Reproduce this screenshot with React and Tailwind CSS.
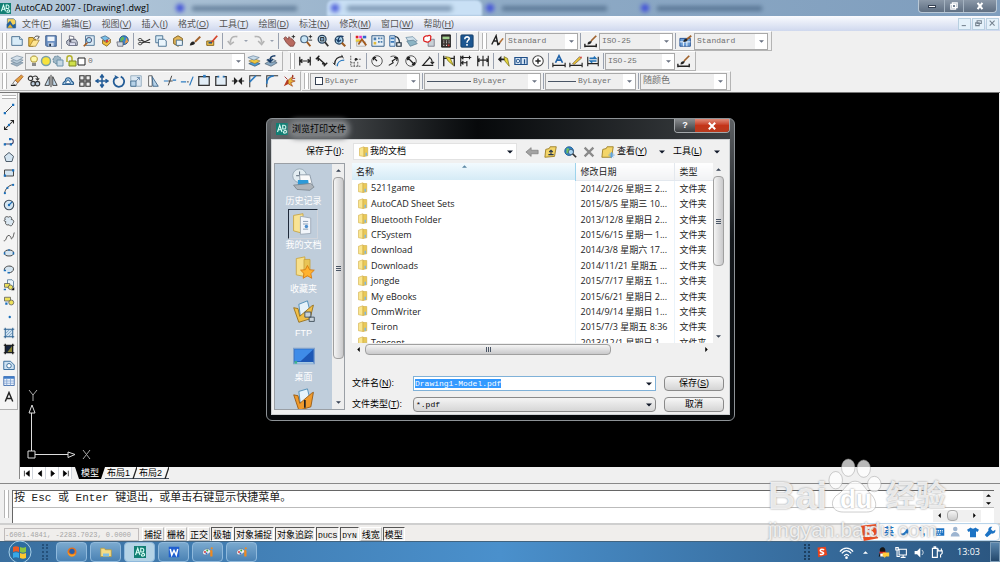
import React, { useEffect, useRef } from 'react';

const MENU = ['文件(F)', '编辑(E)', '视图(V)', '插入(I)', '格式(O)', '工具(T)', '绘图(D)', '标注(N)', '修改(M)', '窗口(W)', '帮助(H)'];

const FILES = [
  ['5211game', '2014/2/26 星期三 2...'],
  ['AutoCAD Sheet Sets', '2015/8/5 星期三 10...'],
  ['Bluetooth Folder', '2013/12/8 星期日 2...'],
  ['CFSystem', '2015/6/15 星期一 1...'],
  ['download', '2014/3/8 星期六 17...'],
  ['Downloads', '2014/11/21 星期五 ...'],
  ['jongde', '2015/7/17 星期五 1...'],
  ['My eBooks', '2015/6/21 星期日 2...'],
  ['OmmWriter', '2014/9/14 星期日 1...'],
  ['Teiron', '2015/7/3 星期五 8:36'],
  ['Tencent', '2013/12/1 星期日 1...'],
];

const ICONS = {
  new: <><path d="M2 3h9l3 3v7H2z" fill="#d9ecf8" stroke="#41698c" /><path d="M11 3v3h3" fill="#fff" stroke="#41698c" /></>,
  open: <><path d="M2 14V4h5l1 2h2L7 14z" fill="#f0c34a" stroke="#8d6a1a" /><path d="M3 14l4-7h7l-4 7z" fill="#ffe692" stroke="#8d6a1a" strokeWidth=".7" /><path d="M8 5c1-3 4-3 6-2l-2 3" stroke="#333" fill="none" /></>,
  save: <><path d="M2 2h12v12H3l-1-1z" fill="#6f93c4" stroke="#2d4f80" /><path d="M4 3h8v5H4z" fill="#eef4fb" /><path d="M5 10h6v4H5z" fill="#c8d6e8" /><path d="M6 11h2v3H6z" fill="#234" /></>,
  plot: <><path d="M5 7V2l5 1v4" fill="#fff" stroke="#667" /><path d="M2 8l3-2h7l2 3v4H4l-2-2z" fill="#c8ccd8" stroke="#4b5268" /><path d="M5 10h7v3H5z" fill="#eef" stroke="#4b5268" strokeWidth=".7" /><circle cx="6" cy="8" r="1.4" fill="#556" /></>,
  preview: <><path d="M4 2h10v11H4z" fill="#dbeaf5" stroke="#486f91" /><circle cx="8" cy="7" r="3" fill="#aee0f8" stroke="#446" /><path d="M6 10l-4 4" stroke="#a45a1c" strokeWidth="2" /></>,
  publish: <><path d="M2 4l5-2 5 3-5 3z" fill="#7cc0e8" stroke="#246" strokeWidth=".7" /><path d="M4 7l5 3 4-4v4l-4 4-5-3z" fill="#f0bf3c" stroke="#6b4d10" strokeWidth=".8" /><circle cx="9" cy="8" r="1.5" fill="#d33" /></>,
  globe: <><circle cx="9" cy="7" r="5" fill="#3c86cc" stroke="#1d4d80" /><path d="M7 3c3 0 3 3 1 4s0 3-2 3c-1-2-2-5 1-7z" fill="#64b755" /><path d="M12 4l2 5-4 2z" fill="#e94" /><path d="M1 9h7v5H2z" fill="#d0d8e2" stroke="#556" strokeWidth=".8" /></>,
  cut: <><path d="M5 7l4 2 6-3M5 10.500L9 9l6 1" stroke="#333" strokeWidth="1.400" fill="none" /><ellipse cx="3.500" cy="6.500" rx="2" ry="1.400" fill="none" stroke="#333" /><ellipse cx="3.500" cy="11" rx="2" ry="1.400" fill="none" stroke="#333" /></>,
  copy: <><path d="M2 2h8v8H2z" fill="#d9ecf8" stroke="#41698c" /><path d="M5 6h7l2 2v6H5z" fill="#eaf5fc" stroke="#41698c" /></>,
  paste: <><path d="M3 5l5-3 5 3v6l-5 3-5-3z" fill="#e3b657" stroke="#785714" /><path d="M6 7h6l1 1v5H6z" fill="#e9f4fb" stroke="#41698c" /></>,
  match: <><path d="M2 13c1-4 3-5 5-4l1 1c0 2-3 3-6 3z" fill="#222" /><path d="M8 9l6-6" stroke="#a0622c" strokeWidth="2.4" /></>,
  block: <><path d="M2 8h8v5H2z" fill="#f1c24d" stroke="#7d5a10" /><path d="M7 10l7-8" stroke="#d5452b" strokeWidth="2" /><path d="M4 10h4" stroke="#357" strokeWidth="2" /></>,
  undo: <path d="M13 3C7 2 5 5 5 10M2 8l3 4 4-3" fill="none" stroke="#b4b4b4" strokeWidth="1.800" />,
  redo: <path d="M3 3c6-1 8 2 8 7M7 8l4 4 3-4" fill="none" stroke="#b4b4b4" strokeWidth="1.800" />,
  pan: <><path d="M2 5l2-2 3 3 1-3 2 2 2 1 3 4-2 4H9L5 10z" fill="#b86a60" stroke="#6e322c" strokeWidth=".8" /><path d="M11 3h4M13 1v4" stroke="#222" /></>,
  zoomrt: <><circle cx="6" cy="6" r="4" fill="#c8e6f7" stroke="#4d6a86" strokeWidth="1.400" /><path d="M9 9l4 5" stroke="#9c5a20" strokeWidth="2.200" /><path d="M11 3h4M13 1v4M11 7h4" stroke="#222" /></>,
  zoomwin: <><circle cx="7" cy="6" r="4.500" fill="#c8e6f7" stroke="#27415c" strokeWidth="1.500" /><path d="M5 4h4v4H5z" fill="#7ba3c4" stroke="#222" /><path d="M10 9l4 5" stroke="#333" strokeWidth="2" /></>,
  zoomprev: <><circle cx="7" cy="7" r="4.500" fill="#a6cfe8" stroke="#27415c" strokeWidth="1.500" /><path d="M10 10l4 4" stroke="#9c5a20" strokeWidth="2.400" /><path d="M12 3C8 1 6 4 6 8M4 6l2 3 3-2" fill="none" stroke="#173b66" strokeWidth="1.500" /></>,
  props: <><path d="M2 2h3v3H2z" fill="#d22" /><path d="M6 2h3v3H6z" fill="#e3c" /><path d="M10 2h4v3h-4z" fill="#36c" /><path d="M2 6h5v3H2z" fill="#ec3" /><path d="M3 9h10v5H3z" fill="#eee" stroke="#888" strokeWidth=".6" /><path d="M5 12l4-6 5 7" stroke="#a45a1c" strokeWidth="2" fill="none" /></>,
  dcenter: <><path d="M1 2h14v12H1z" fill="#e7f0f8" stroke="#24507c" /><path d="M3 4h3v3H3zM8 4h2v2H8zM11 4h2v2h-2zM8 8h2v2H8zM11 8h2v2h-2z" fill="#4e7fae" /><path d="M3 9h3v3H3z" fill="#e2bb3a" /></>,
  palette: <><path d="M2 2h6v12H2z" fill="#dcebf8" stroke="#2a5c93" /><path d="M3 4h4v2H3zM3 8h4v2H3z" fill="#3a78b8" /><path d="M8 3c4 0 5 3 5 7M10 10h5v4h-5z" fill="none" stroke="#234" strokeWidth="1.400" /></>,
  sheets: <><path d="M1 4l8-1 5 5-9 2z" fill="#cfe0ea" stroke="#6688a0" strokeWidth=".8" /><path d="M2 8l8-1 4 4-8 3z" fill="#8db4c4" stroke="#57788c" strokeWidth=".8" /></>,
  markup: <><path d="M7 6h7v8H7z" fill="#c9d0d6" stroke="#667" strokeWidth=".8" /><path d="M3 3c2-2 3 0 4-1s4 0 3 2 1 3-1 4-2 2-4 1-3 0-3-2-1-3 1-4z" fill="#fff" stroke="#d22" strokeWidth="1.500" /></>,
  calc: <><path d="M3 1h10v14H3z" fill="#3a3230" stroke="#111" /><path d="M4 3h8v3H4z" fill="#9fcf8c" /><path d="M5 8h1M8 8h1M11 8h1M5 10h1M8 10h1M11 10h1M5 13h1M8 13h1" stroke="#eee" strokeWidth="1.300" /><path d="M10 12h2v2h-2z" fill="#c33" /></>,
  help: <><rect x="1" y="1" width="14" height="14" rx="1" fill="#1d5791" stroke="#123a64" /><path d="M5.500 6c0-4 5.500-3 5-.5C10 7.500 8 7 8 10M8 11.500v2" fill="none" stroke="#fff" strokeWidth="1.800" /></>,
  textstyle: <><path d="M2 12l5-10 2 10M4 8h5" fill="none" stroke="#222" strokeWidth="1.600" /><path d="M8 13c0-3 2-4 4-3-1 3-2 3-4 3z" fill="#222" /><path d="M11 10l4-5" stroke="#b16f35" strokeWidth="1.800" /></>,
  dimstyle: <><path d="M1 14h13M1 11v4M14 11v4" stroke="#222" strokeWidth="1.600" /><path d="M4 12c0-3 2-4 5-4 0 2-2 4-5 4z" fill="#222" /><path d="M8 8l6-6" stroke="#a0622c" strokeWidth="2" /></>,
  tablestyle: <><path d="M1 5h12v9H1z" fill="#6ea0d8" stroke="#1f4d90" /><path d="M1 9h12M5 9v5M9 9v5" stroke="#fff" /><path d="M5 9c0-3 2-4 5-4 0 3-2 4-5 4z" fill="#222" /><path d="M9 6l5-4" stroke="#a0622c" strokeWidth="2" /></>,
  layers: <><path d="M1 11l7-3 7 2-7 4z" fill="#9fb2c2" stroke="#6b8296" strokeWidth=".7" /><path d="M1 8l7-3 7 2-7 4z" fill="#b9cbd9" stroke="#6b8296" strokeWidth=".7" /><path d="M1 5l7-3 7 2-7 4z" fill="#d4e0ea" stroke="#6b8296" strokeWidth=".7" /></>,
  layercur: <><path d="M2 11l6-3 7 3-6 3z" fill="#4a9ad4" stroke="#234" strokeWidth=".6" /><path d="M2 8l6-3 7 3-6 3z" fill="#f0c83c" stroke="#764" strokeWidth=".6" /><path d="M1 4l6-2 7 2-6 3z" fill="#c8dbe8" stroke="#468" strokeWidth=".6" /></>,
  layerprev: <><path d="M1 11l7-4 7 3-7 4z" fill="#8aa9c2" stroke="#456" strokeWidth=".7" /><path d="M3 7l5-2 6 3-6 2z" fill="#c5d7e4" stroke="#456" strokeWidth=".7" /><path d="M13 2C8 2 7 4 7 8M4 6l3 3 3-3" stroke="#173b66" strokeWidth="1.700" fill="none" /></>,
  dimlin: <path d="M2 3v10M14 3v10M2 8h12M5 6L2 8l3 2M11 6l3 2-3 2" fill="none" stroke="#222" strokeWidth="1.400" />,
  dimali: <path d="M1 6l4-4M10 14l4-4M3 4l9 8M3 4l1 4M12 12l-4-1" fill="none" stroke="#222" strokeWidth="1.600" />,
  dimarc: <><path d="M3 12C3 6 7 3 12 3" fill="none" stroke="#222" strokeWidth="1.500" /><path d="M6 14c0-4 3-7 8-7" fill="none" stroke="#2b7ac0" strokeWidth="1.500" /><path d="M1 10l3 3M11 1l2 4" stroke="#222" /></>,
  dimord: <><path d="M2 2v12h12M2 10h4l2-4h6M6 14v-4M10 14V9" fill="none" stroke="#555" strokeDasharray="2 1" /><circle cx="8" cy="6" r="1.500" fill="#222" /></>,
  dimrad: <><circle cx="8" cy="8" r="6" fill="#f4f4f4" stroke="#444" /><path d="M8 8L4 4M4 7V4h3" stroke="#222" fill="none" strokeWidth="1.300" /></>,
  dimjog: <><path d="M4 3c8-3 12 4 6 11" fill="none" stroke="#444" /><path d="M2 13l5-3-1-2 6-4M12 4L8 4M12 4l-1 4" fill="none" stroke="#222" strokeWidth="1.300" /></>,
  dimdia: <><circle cx="8" cy="8" r="6" fill="#f4f4f4" stroke="#444" /><path d="M4 4l8 8M4 7V4h3M12 9v3H9" stroke="#222" fill="none" strokeWidth="1.500" /></>,
  dimang: <path d="M14 13H2l8-9M9 3c3 2 4 5 4 8M11 9l2 2 2-2" fill="none" stroke="#222" strokeWidth="1.300" />,
  quick: <><path d="M2 2v12M14 2v12M2 5h12" stroke="#222" strokeWidth="1.500" /><path d="M4 3l5 1 4 9-6-5z" fill="#e8d83c" stroke="#6d6510" strokeWidth=".8" /></>,
  base: <path d="M2 2v12M2 4h12M2 10h7M9 8v6M12 2v4M5 2L3 4l2 2M5 8l-2 2 2 2" fill="none" stroke="#222" strokeWidth="1.300" />,
  cont: <path d="M2 2v12M8 2v12M14 2v12M2 7h12M4 5L2 7l2 2M12 5l2 2-2 2" fill="none" stroke="#222" strokeWidth="1.300" />,
  leader: <><path d="M1 6l4-4v3h6v2H5v3z" fill="#222" /><path d="M8 3l4 2 2 9-5-6z" fill="#e8d83c" stroke="#6d6510" strokeWidth=".8" /></>,
  tol: <><path d="M1 4h14v8H1z" fill="#d7e6f5" stroke="#1f4f88" strokeWidth="1.400" /><path d="M8 4v8M12 6v5" stroke="#1f4f88" strokeWidth="1.400" /><circle cx="4.500" cy="8" r="2" fill="none" stroke="#1f4f88" /></>,
  center: <><circle cx="8" cy="8" r="6" fill="#fff" stroke="#444" strokeWidth="1.200" /><path d="M8 5v6M5 8h6" stroke="#222" strokeWidth="1.600" /></>,
  dimtedit: <><path d="M4 10l4-8 4 8M6 7h4" fill="none" stroke="#1f62a8" strokeWidth="1.900" /><path d="M1 13h14M1 10v5M15 10v5" stroke="#222" strokeWidth="1.300" /></>,
  dimedit: <><path d="M1 13h14M1 10v5M15 10v5" stroke="#222" strokeWidth="1.300" /><path d="M4 11l8-8 2 2-8 7z" fill="#e7c033" stroke="#654" strokeWidth=".7" /><path d="M12 3l2 2 1-2z" fill="#d33" /></>,
  dimupd: <><path d="M2 3v11M14 3v11M2 11h12" stroke="#222" strokeWidth="1.300" /><path d="M4 5h7l-2-2M12 8H5l2 2" stroke="#2171b5" strokeWidth="1.800" fill="none" /></>,
  erase: <><path d="M1 13h6" stroke="#222" strokeWidth="1.500" /><path d="M3 11l3-4 3 2-2 4z" fill="#f2f2f2" stroke="#555" strokeWidth=".8" /><path d="M6 7l7-6 2 2-6 7z" fill="#e0a040" stroke="#a04a1a" strokeWidth=".8" /></>,
  copyobj: <><circle cx="4" cy="5" r="2.500" fill="none" stroke="#333" strokeWidth="1.300" /><path d="M7 3c4-2 6 1 5 4M10 5l2 2 2-2" fill="none" stroke="#333" strokeWidth="1.200" /><circle cx="7" cy="11" r="2.500" fill="#bcd" stroke="#333" strokeWidth="1.300" /><circle cx="12" cy="11" r="2.500" fill="#bcd" stroke="#333" strokeWidth="1.300" /></>,
  mirror: <><path d="M6 3v10H1zM10 3v10h5z" fill="#c5dcee" stroke="#333" /><path d="M8 1v14" stroke="#222" /></>,
  offset: <><path d="M2 12c0-3 2-3 3-4 0-5 6-5 7 0 2 1 3 2 2 4z" fill="#a7cbe8" stroke="#2d5f8e" strokeWidth="1.300" /><path d="M5 11c1-3 2-2 2-4h2c0 2 2 2 2 4z" fill="#fff" stroke="#2d5f8e" /></>,
  array: <path d="M2 2h5v5H2zM9 2h5v5H9zM2 9h5v5H2zM9 9h5v5H9z" fill="#eee" stroke="#333" strokeWidth="1.300" />,
  move: <path d="M8 2v12M2 8h12M6 4l2-3 2 3M6 12l2 3 2-3M4 6L1 8l3 2M12 6l3 2-3 2" fill="none" stroke="#225b96" strokeWidth="1.700" />,
  rotate: <><path d="M4 4a6 6 0 1 0 6-1" fill="none" stroke="#225b96" strokeWidth="2" /><path d="M3 1l1 5 4-2z" fill="#225b96" /></>,
  scale: <><path d="M2 2h12v12H2z" fill="#dce8f2" stroke="#90a8bc" /><path d="M2 8h6v6H2z" fill="#b6d2e8" stroke="#41698c" /><path d="M8 8l4-4M9 4h3v3" stroke="#68a" fill="none" /></>,
  stretch: <><path d="M3 2v12h4V2z" fill="#fff" stroke="#555" /><path d="M7 3l7 11H8z" fill="#b6d2e8" stroke="#3a6186" /></>,
  trim: <><path d="M1 8h5M11 7h4" stroke="#2b7ac0" strokeWidth="1.400" /><path d="M6 13l4-11M6 8h5" stroke="#333" /></>,
  extend: <><path d="M1 9h6" stroke="#2b7ac0" strokeWidth="1.400" /><path d="M8 9h3" stroke="#333" strokeDasharray="2 1" /><path d="M11 13l4-10" stroke="#2b7ac0" strokeWidth="1.400" /></>,
  breakpt: <><path d="M2 3h12v10H2z" fill="#e2edf6" stroke="#333" strokeWidth="1.400" /><path d="M7 1h3v3H7z" fill="#2b7ac0" /></>,
  brk: <><path d="M5 3H2v10h12V3h-3" fill="#e2edf6" stroke="#333" strokeWidth="1.400" /><path d="M4 2h2v2H4zM10 2h2v2h-2z" fill="#2b7ac0" /></>,
  join: <path d="M1 8h5M15 8h-5M4 5l3 3-3 3zM12 5L9 8l3 3z" fill="#222" stroke="#222" strokeWidth="1.300" />,
  chamfer: <><path d="M2 15V2h13" fill="none" stroke="#333" strokeWidth="1.200" /><path d="M2 9l7-7" stroke="#2b7ac0" strokeWidth="1.800" /></>,
  fillet: <><path d="M2 15V2h13" fill="none" stroke="#333" strokeWidth="1.200" /><path d="M2 11c0-5 3-9 8-9" fill="none" stroke="#2b7ac0" strokeWidth="2" /></>,
  explode: <><path d="M2 14l4-8 4 4z" fill="#b63a22" /><path d="M7 7l6-5-2 5 4 1-5 2 2 4-5-3z" fill="#e9b83c" stroke="#a4421a" strokeWidth=".8" /><path d="M12 1v3M15 5h-3M3 3l3 3" stroke="#922" /></>,
  line: <><path d="M2 14L14 2" stroke="#444" strokeWidth="1.300" /><path d="M1 12h3v3H1zM12 1h3v3h-3z" fill="#1b6fba" /></>,
  xline: <><path d="M2 14L14 2M2 10v4h4M10 2h4v4" stroke="#222" fill="none" strokeWidth="1.400" /><circle cx="8" cy="8" r="1.600" fill="#1b6fba" /></>,
  pline: <><path d="M2 12h8c5 0 5-7 0-7" fill="none" stroke="#446" strokeWidth="1.400" /><path d="M1 11h3v3H1zM9 11h3v3H9zM8 4h3v3H8z" fill="#1b6fba" /></>,
  polygon: <path d="M8 2l6 5-2 7H4L2 7z" fill="#d4e4f0" stroke="#4a5866" strokeWidth="1.300" />,
  rect: <><path d="M2 4h12v8H2z" fill="#d4e4f0" stroke="#444" strokeWidth="1.300" /><path d="M1 10h3v3H1zM12 3h3v3h-3z" fill="#1b6fba" /></>,
  arc: <><path d="M2 14C3 8 7 3 14 2" fill="none" stroke="#444" strokeWidth="1.300" /><circle cx="2.500" cy="13.500" r="1.500" fill="#1b6fba" /><circle cx="6" cy="6.500" r="1.500" fill="#1b6fba" /><circle cx="13.500" cy="2.500" r="1.500" fill="#1b6fba" /></>,
  circle: <><circle cx="8" cy="8" r="6.300" fill="#d4e4f0" stroke="#3a4a5a" strokeWidth="1.400" /><path d="M8 8l4-4" stroke="#1b6fba" strokeWidth="1.500" /><circle cx="8" cy="8" r="1.600" fill="#1b6fba" /></>,
  cloud: <path d="M3 6c-2-3 2-5 4-3 2-2 6 0 4 3 4 0 4 4 2 5 0 4-4 4-5 2-3 1-6-1-4-4-3 0-3-3-1-3z" fill="#dae7f1" stroke="#444" strokeWidth="1.200" />,
  spline: <path d="M1 13C5 14 4 5 8 6s2 6 4 4 2-5 3-8" fill="none" stroke="#555" strokeWidth="1.300" />,
  ellipse: <><ellipse cx="8" cy="8" rx="6" ry="4" fill="#d4e4f0" stroke="#444" strokeWidth="1.300" /><path d="M1 7h2v3H1zM13 7h2v3h-2zM7 3h2v2H7z" fill="#1b6fba" /></>,
  ellarc: <><path d="M2 10C0 3 14 2 14 8c0 3-3 5-6 5" fill="#d4e4f0" stroke="#444" strokeWidth="1.300" /><path d="M1 9h3v2H1zM6 12h3v2H6z" fill="#1b6fba" /></>,
  insblock: <><path d="M6 1h6l2 2v8H6z" fill="#eaf5fc" stroke="#41698c" /><path d="M2 6h7v5H2z" fill="#ece05a" stroke="#555" /><circle cx="10" cy="11" r="3" fill="#ece05a" stroke="#555" /><path d="M1 13h3v2H1z" fill="#1b6fba" /><path d="M15 11v4h-4z" fill="#111" /></>,
  mkblock: <><path d="M2 3h8v5H2z" fill="#ece05a" stroke="#555" /><circle cx="11" cy="10" r="3.300" fill="#ece05a" stroke="#555" /><path d="M3 10h3v3H3z" fill="#1b6fba" /></>,
  point: <circle cx="9" cy="8" r="1.600" fill="#1b6fba" />,
  hatch: <><path d="M3 3h10v10H3z" fill="#cde0f0" /><path d="M3 1v14M13 1v14M1 3h14M1 13h14" stroke="#2a5f90" strokeWidth="1.300" /><path d="M4 8l4-4M4 12l8-8M8 12l4-4" stroke="#5d8ab2" strokeWidth=".8" /></>,
  gradient: <><path d="M3 3h10v10H3z" fill="#17243c" /><path d="M6 12l6-8v8z" fill="#8a8430" /><path d="M3 1v14M13 1v14M1 3h14M1 13h14" stroke="#111" strokeWidth="1.500" /></>,
  region: <><path d="M1 3h9l5 5v6H1z" fill="#cfe2f2" stroke="#2f6596" strokeWidth="1.200" /><circle cx="8" cy="9" r="3" fill="#fff" stroke="#2f6596" strokeWidth="1.200" /></>,
  table: <><path d="M1 2h14v12H1z" fill="#eaf2fb" stroke="#2657a0" /><path d="M1 2h14v3H1z" fill="#3f7cc8" /><path d="M1 8h14M1 11h14M5 5v9M10 5v9" stroke="#7c9fd0" /></>,
  mtext: <path d="M3 14L8 2l5 12M5 10h6" fill="none" stroke="#222" strokeWidth="1.900" />,
  cad: <><path d="M0 0h16v16H0z" fill="#127f74" /><path d="M2 12L5 3l3 9M3 9h4M9 3v5h3c2-2 1-5-1-5zM10 13c0-3 3-4 4-2s-2 3-4 2z" fill="none" stroke="#d9fff6" strokeWidth="1.500" /></>,
  dwg: <><path d="M2 1h9l3 3v10H2z" fill="#f5d25a" stroke="#41698c" /><path d="M1 9l5-5 4 6 4-2v7H1z" fill="#255f9c" /><path d="M2 14l4-5 4 5z" fill="#e7b22c" /></>,
  folder: <><path d="M2 3l6-2v13l-6-1z" fill="#f9e58f" stroke="#cba53a" strokeWidth=".7" /><path d="M8 2h5v11l-5 1z" fill="#e9c958" stroke="#cba53a" strokeWidth=".7" /><path d="M10 9h2v4h-2z" fill="#7fb7e0" /></>,
  back: <path d="M1 8l6-5v3h8v4H7v3z" fill="#a3a3a3" stroke="#7d7d7d" strokeWidth=".8" />,
  up: <><path d="M1 14l1-9 4-1 1-2h7l-2 11z" fill="#f3d569" stroke="#9a7c22" /><path d="M5 11h6M8 11V6M6 8l2-2 2 2" stroke="#28384e" fill="none" strokeWidth="1.300" /></>,
  web: <><circle cx="7" cy="7" r="5" fill="#3184c8" stroke="#1d5b91" /><path d="M4 4c3-1 4 1 3 3s-2 2-3 3z" fill="#72c457" /><circle cx="9" cy="8" r="3" fill="#c7e8fb" opacity=".8" stroke="#456" /><path d="M11 10l4 4" stroke="#333" strokeWidth="2" /></>,
  del: <path d="M3 3l10 10M13 3L3 13" stroke="#8a8a8a" strokeWidth="2.600" />,
  newfolder: <><path d="M1 14l1-9 4-1 1-2h7l-2 12z" fill="#f3d569" stroke="#9a7c22" /><path d="M12 8v7M8.500 11.500h7M10 9l4 5M14 9l-4 5" stroke="#5aa4e8" /></>,
};

function Icon({ name, className = 'w-[15px] h-[15px]' }) {
  return (
    <svg viewBox="0 0 16 16" className={`shrink-0 ${className}`} aria-hidden="true">
      {ICONS[name]}
    </svg>
  );
}

function Arrow({ dir = 'down', className = 'w-[6px] h-[6px] text-gray-900' }) {
  const d = {
    down: 'M0 2h8L4 6z',
    up: 'M0 6h8L4 2z',
    left: 'M6 0v8L2 4z',
    right: 'M2 0v8l4-4z',
  };
  return (
    <svg viewBox="0 0 8 8" className={`shrink-0 ${className}`} aria-hidden="true">
      <path d={d[dir]} fill="currentColor" />
    </svg>
  );
}

function Sep() {
  return (
    <span className="w-1 h-4 shrink-0 flex justify-center">
      <span className="w-px h-full bg-gray-400"></span>
    </span>
  );
}

// a string of icon names, "|" is a divider
function Tools({ list }) {
  return list.split(' ').map((name, i) =>
    name === '|' ? (
      <Sep key={i} />
    ) : (
      <button key={i} aria-label={name} className="w-[17px] h-[17px] shrink-0 flex items-center justify-center">
        <Icon name={name} className="w-[14px] h-[14px]" />
      </button>
    )
  );
}

function Bar({ children }) {
  return (
    <div className="h-5 flex items-center shrink-0 pl-[2px] pr-[3px] border-r border-b border-[#b4b4b4] border-t border-t-white bg-[#f1f1f1]">
      <span className="w-[5px] h-4 mr-px border-x border-[#b5b5b5] bg-white shrink-0"></span>
      {children}
    </div>
  );
}

function Combo({ value, label, className, lead, size = 'text-[8px]' }) {
  return (
    <div className={`h-[17px] flex items-center shrink-0 border border-[#a9a9a9] bg-[#efefef] text-[#707070] ${className}`}>
      {lead}
      <select aria-label={label} className={`flex-1 min-w-0 appearance-none pl-[2px] leading-[14px] font-['Liberation_Mono','Noto_Sans_CJK_SC',monospace] ${size}`}>
        <option>{value}</option>
      </select>
      <span className="w-3 h-full bg-white flex items-center justify-center pointer-events-none">
        <Arrow className="w-[5px] h-[5px] text-gray-500" />
      </span>
    </div>
  );
}

function SmallArrow() {
  return (
    <button aria-label="更多" className="w-[9px] flex justify-center">
      <Arrow className="w-1 h-1 text-gray-400" />
    </button>
  );
}

function TitleBar() {
  return (
    <header className="h-4 shrink-0 flex items-center overflow-hidden bg-gradient-to-r from-[#b7cbdc] via-[#8fabc6] to-[#7e9dbd]">
      <Icon name="cad" className="w-[11px] h-[11px]" />
      <h1 className="ml-1 w-[143px] shrink-0 text-[9px] leading-4 text-black whitespace-nowrap font-['Open_Sans','Noto_Sans',sans-serif]">
        AutoCAD 2007 - [Drawing1.dwg]
      </h1>
      <div className="flex-1 h-4 flex items-center pl-[14px] overflow-hidden" aria-hidden="true">
        {[0, 1, 2, 3].map((n) => (
          <div key={n} className={'w-[155px] h-full shrink-0 flex items-center gap-2 px-1 ' + (n === 1 ? 'bg-[#c9e0f5] rounded-t-md blur-[1px]' : '')}>
            <span className="w-2 h-2 rounded-full bg-[#4353d8] blur-[2px]"></span>
            <span className="w-[105px] h-[5px] bg-[#3c5878] opacity-60 blur-[2px]"></span>
          </div>
        ))}
      </div>
      <div className="h-4 shrink-0 mr-[3px] flex items-start">
        <div className="h-[13px] flex rounded-b-sm border border-t-0 border-[#b9c8d6] bg-gradient-to-b from-[#8b98a8] to-[#5f6f82] text-white">
          <button aria-label="最小化" className="w-[25px] flex items-center justify-center">
            <span className="w-2 h-[3px] bg-white border border-gray-700"></span>
          </button>
          <button aria-label="还原" className="w-5 flex items-center justify-center border-x border-[#a5b3c1]">
            <svg viewBox="0 0 10 10" className="w-2 h-2"><path d="M3 1h6v6H3zM1 3h6v6H1z" fill="none" stroke="#fff" strokeWidth="1.500" /></svg>
          </button>
          <button aria-label="关闭" className="w-8 flex items-center justify-center">
            <svg viewBox="0 0 10 10" className="w-2 h-2"><path d="M2 1l6 8M8 1L2 9" stroke="#fff" strokeWidth="2.500" /></svg>
          </button>
        </div>
      </div>
    </header>
  );
}

function MenuBar() {
  return (
    <nav className="h-[15px] shrink-0 flex items-center pl-[6px] pr-px bg-gradient-to-b from-[#fafbfe] to-[#cfd8ee]">
      <Icon name="dwg" className="w-[11px] h-[11px]" />
      <div className="flex-1 flex gap-[10px] pl-[5px] text-[9px] leading-[14px] text-[#555] whitespace-nowrap">
        {MENU.map((item) => (
          <button key={item}>
            {item.slice(0, 3)}
            <u>{item[3]}</u>)
          </button>
        ))}
      </div>
      {['M1 8h6', 'M3 1h6v4H3zM1 4h5v4H1z', 'M1 1l7 7M8 1L1 8'].map((d, i) => (
        <button key={d} aria-label={['最小化图形', '还原图形', '关闭图形'][i]} className="w-[13px] h-3 ml-px flex items-center justify-center border border-[#b8cfe0] bg-[#e4f1fa]">
          <svg viewBox="0 0 10 10" className="w-[7px] h-[7px]"><path d={d} fill="none" stroke="#75828f" strokeWidth="1.500" /></svg>
        </button>
      ))}
    </nav>
  );
}

function Toolbars() {
  return (
    <div className="shrink-0 flex flex-col pb-px border-b border-[#777] bg-[#f0f0f0]">
      <div className="flex gap-px">
        <Bar>
          <Tools list="new open save | plot preview publish globe | cut copy paste match block | undo" />
          <SmallArrow />
          <Tools list="redo" />
          <SmallArrow />
          <Tools list="| pan zoomrt zoomwin zoomprev | props dcenter palette sheets markup calc | help" />
        </Bar>
        <Bar>
          <Tools list="textstyle" />
          <Combo label="文字样式" value="Standard" className="w-[73px]" />
          <Tools list="| dimstyle" />
          <Combo label="标注样式" value="ISO-25" className="w-[74px]" />
          <Tools list="| tablestyle" />
          <Combo label="表格样式" value="Standard" className="w-[74px]" />
        </Bar>
      </div>
      <div className="flex gap-px">
        <Bar>
          <Tools list="layers" />
          <Combo
            label="图层"
            value="0"
            className="w-[220px]"
            lead={
              <svg viewBox="0 0 60 14" className="w-[60px] h-[14px] shrink-0" aria-hidden="true">
                <path d="M8 2c4 0 4 4 2 6H6C4 6 4 2 8 2z" fill="#fff8a8" stroke="#a8912c" />
                <path d="M6 9h4v3H6z" fill="#8a8a8a" />
                <circle cx="20" cy="7" r="4.500" fill="#f8e23c" stroke="#7aa0a8" strokeWidth="1.500" />
                <circle cx="31" cy="6" r="4" fill="#9fb7c6" stroke="#5f8296" strokeDasharray="2 1" />
                <path d="M31 6h6v6h-6z" fill="#c6d8e4" stroke="#6c92aa" />
                <path d="M41 8V4c0-3 5-3 5 0v4" fill="none" stroke="#b3b02a" strokeWidth="1.500" />
                <path d="M43 7h7v5h-7z" fill="#cfe04a" stroke="#7a8420" />
                <path d="M52 4h7v7h-7z" fill="#fff" stroke="#222" />
              </svg>
            }
          />
          <Tools list="layercur layerprev" />
        </Bar>
        <span className="w-[3px]"></span>
        <Bar>
          <Tools list="dimlin dimali dimarc dimord | dimrad dimjog dimdia dimang | quick base cont | leader tol center | dimtedit dimedit dimupd |" />
          <Combo label="当前标注样式" value="ISO-25" className="w-[70px]" />
          <Tools list="dimstyle" />
        </Bar>
      </div>
      <div className="flex gap-px">
        <Bar>
          <Tools list="erase copyobj mirror offset array move rotate scale stretch trim extend breakpt brk join chamfer fillet explode" />
        </Bar>
        <Bar>
          <Combo label="颜色" value="ByLayer" className="w-[110px]" lead={<span className="w-2 h-2 ml-1 shrink-0 border border-gray-700 bg-white"></span>} />
          <Sep />
          <Combo label="线型" value="ByLayer" className="w-[117px]" lead={<span className="w-11 h-px ml-[2px] shrink-0 bg-gray-600"></span>} />
          <Sep />
          <Combo label="线宽" value="ByLayer" className="w-[91px]" lead={<span className="w-7 h-px ml-[2px] shrink-0 bg-gray-600"></span>} />
          <Sep />
          <Combo label="打印样式" value="随颜色" className="w-[87px]" size="text-[9px]" />
        </Bar>
      </div>
    </div>
  );
}

const DRAW = ['line', 'xline', 'pline', 'polygon', 'rect', 'arc', 'circle', 'cloud', 'spline', 'ellipse', 'ellarc', 'insblock', 'mkblock', 'point', 'hatch', 'gradient', 'region', 'table', 'mtext'];

function DrawBar() {
  return (
    <div className="w-5 shrink-0 bg-[#f0f0f0] border-r border-[#888]">
      <div className="w-[18px] pt-[2px] pb-1 flex flex-col items-center border-r border-b border-[#b0b0b0] bg-[#f4f4f4]">
        <span className="w-[14px] h-[4px] mb-[2px] border-y border-[#b5b5b5] bg-white"></span>
        {DRAW.map((name) => (
          <button key={name} aria-label={name} className="h-4 w-4 flex items-center justify-center">
            <Icon name={name} className="w-3 h-3" />
          </button>
        ))}
      </div>
    </div>
  );
}

function Pages() {
  return (
    <svg viewBox="0 0 28 28" className="w-6 h-6">
      <path d="M3 4l11-2v23L3 22z" fill="#f8e394" stroke="#c8a440" />
      <path d="M11 5l12 2v18l-12 1z" fill="#f2f6fb" stroke="#9aa7b5" />
      <path d="M14 11h6M14 14h6M14 20h6" stroke="#7c93ac" />
      <circle cx="18" cy="17" r="2" fill="#4d8fcd" />
    </svg>
  );
}

const PLACES = [
  {
    name: '历史记录',
    icon: (
      <svg viewBox="0 0 28 28" className="w-6 h-6">
        <circle cx="10" cy="9" r="8" fill="#e3edf2" stroke="#90a3b0" />
        <path d="M10 4v5h-4" stroke="#456" fill="none" />
        <path d="M10 8h12l3 12-14 1z" fill="#fafafa" stroke="#8795a3" />
        <path d="M8 14h12l1 6H8z" fill="#2d9ad8" />
        <path d="M3 20l20-2 4 4-5 4-15-1z" fill="#aeb4ba" stroke="#7b858f" />
      </svg>
    ),
  },
  { name: '我的文档', icon: <Pages />, active: true },
  {
    name: '收藏夹',
    icon: (
      <svg viewBox="0 0 28 28" className="w-6 h-6">
        <path d="M5 3l10-2v23L5 22z" fill="#f8e08a" stroke="#c8a440" />
        <path d="M14 4h7v19l-7 1z" fill="#e8c455" stroke="#c8a440" />
        <path d="M18 11l2.500 5 5.500.5-4 4 1 5.500-5-3-5 3 1-5.500-4-4 5.500-.5z" fill="#ffb22e" stroke="#d6780f" />
      </svg>
    ),
  },
  {
    name: 'FTP',
    icon: (
      <svg viewBox="0 0 28 28" className="w-6 h-6">
        <path d="M8 5l10-4 4 16-12 4z" fill="#e6f3fb" stroke="#4487b2" />
        <path d="M2 9l5 1 2 9 14-12 2-1-4 16-13 4z" fill="#f0bf48" stroke="#936d18" />
        <path d="M15 14h7v6h-7zM20 20h6v5h-6z" fill="#c8d2da" stroke="#3b4a55" />
      </svg>
    ),
  },
  {
    name: '桌面',
    icon: (
      <svg viewBox="0 0 28 28" className="w-6 h-6">
        <path d="M2 5h24v18H2z" fill="#1d57b5" stroke="#7ea0cc" strokeWidth="1.500" />
        <path d="M3 6h22L10 20H3z" fill="#3f8ce8" />
        <path d="M3 21h22v2H3z" fill="#a8c8e0" />
        <path d="M3 20h3v3H3z" fill="#3fb58c" />
      </svg>
    ),
  },
  {
    name: '',
    icon: (
      <svg viewBox="0 0 28 28" className="w-6 h-6">
        <path d="M8 4l10-3 4 16-12 4z" fill="#e6f3fb" stroke="#4487b2" />
        <path d="M2 8l5 1 2 9 14-12 2-1-3 17-14 4z" fill="#ef9a2c" stroke="#94560f" />
        <path d="M15 14v9" stroke="#222" strokeWidth="2" />
      </svg>
    ),
  },
];

function Grip({ vertical }) {
  return (
    <span className={vertical ? 'w-[5px] h-[5px] border-y border-gray-600 flex items-center' : 'w-[5px] h-[5px] border-x border-gray-600 flex justify-center'}>
      <span className={vertical ? 'w-full h-px bg-gray-600' : 'w-px h-full bg-gray-600'}></span>
    </span>
  );
}

function SaveDialog() {
  const nameRef = useRef(null);
  useEffect(() => {
    nameRef.current.focus();
    nameRef.current.select();
  }, []);

  return (
    <div
      role="dialog"
      aria-label="浏览打印文件"
      className="absolute left-[246px] top-[25px] w-[469px] px-1 pb-[5px] rounded-md border border-[#8d9296] bg-gradient-to-b from-[#5d6063] via-[#15191d] via-40% to-[#07090b]"
    >
      <div className="h-5 flex items-center pl-[5px] rounded-t-md bg-gradient-to-r from-[#63676a] via-[#07090b] via-45% to-[#3c4043]">
        <Icon name="cad" className="w-3 h-3" />
        <h2 className="ml-[3px] px-px text-[9px] leading-[14px] text-black bg-[#7a7d80] rounded-md shadow-[0_0_5px_3px_#7a7d80]">浏览打印文件</h2>
        <div className="ml-auto self-start h-[14px] flex rounded-b-sm border border-t-0 border-[#a4a8ab] overflow-hidden">
          <button aria-label="帮助" className="w-5 text-[9px] leading-[13px] font-bold text-white bg-gradient-to-b from-[#8a8d90] to-[#3a3d40]">?</button>
          <button aria-label="关闭" className="w-[34px] flex items-center justify-center bg-gradient-to-b from-[#e08a78] via-[#c43418] to-[#b83a1d]">
            <svg viewBox="0 0 10 10" className="w-2 h-2"><path d="M1 1l8 8M9 1L1 9" stroke="#fff" strokeWidth="2.500" /></svg>
          </button>
        </div>
      </div>

      <div className="bg-[#f0f0f0] border border-[#cfd2d4] text-[9px] text-black pb-[2px]">
        {/* look in row */}
        <div className="h-[23px] flex items-center">
          <label htmlFor="lookin" className="w-[72px] mr-[9px] text-right whitespace-nowrap">
            保存于(<u>I</u>):
          </label>
          <div className="w-[164px] h-[17px] flex items-center pl-1 pr-[3px] bg-white border border-[#e2e2e2]">
            <Icon name="folder" className="w-3 h-3" />
            <select id="lookin" className="flex-1 appearance-none text-[9px] leading-[15px]">
              <option>我的文档</option>
            </select>
            <Arrow />
          </div>
          <div className="flex ml-[5px]">
            {['back', 'up', 'web', 'del', 'newfolder'].map((name) => (
              <button key={name} aria-label={name} className="w-[19px] flex justify-center">
                <Icon name={name} className="w-[14px] h-[14px]" />
              </button>
            ))}
          </div>
          <button className="flex items-center gap-3 whitespace-nowrap">
            <span>查看(<u>Y</u>)</span>
            <Arrow />
          </button>
          <button className="ml-2 flex items-center gap-3 whitespace-nowrap">
            <span>工具(<u>L</u>)</span>
            <Arrow />
          </button>
        </div>

        <div className="flex pl-[2px]">
          <aside className="w-[71px] h-[247px] shrink-0 flex border border-[#9a9fa5] bg-[#bfcddb] overflow-hidden">
            <div className="flex-1 flex flex-col pt-px items-center text-white">
              {PLACES.map((p) => (
                <button key={p.name} className="h-11 shrink-0 flex flex-col items-center">
                  <span className={'w-[30px] h-[30px] flex items-center justify-center ' + (p.active ? 'border border-t-gray-800 border-l-gray-800 border-r-gray-300 border-b-gray-300' : '')}>
                    {p.icon}
                  </span>
                  <span className="leading-[13px] whitespace-nowrap">{p.name}</span>
                </button>
              ))}
            </div>
            <div className="w-3 flex flex-col items-center bg-[#eeeeee]">
              <span className="h-[13px] flex items-center"><Arrow dir="up" className="w-[5px] h-[5px] text-gray-700" /></span>
              <span className="w-[11px] h-[182px] flex items-center justify-center rounded-sm border border-[#a0a0a0] bg-gradient-to-r from-[#f5f5f5] to-[#c9c9cb]"><Grip vertical /></span>
              <span className="mt-auto h-[13px] flex items-center"><Arrow className="w-[5px] h-[5px] text-gray-700" /></span>
            </div>
          </aside>

          <div className="flex-1 min-w-0 pl-[7px] pr-[5px]">
            <div className="flex h-[180px] bg-white overflow-hidden">
              <div className="flex-1 overflow-hidden">
                <table className="w-full h-[187px] table-fixed border-collapse text-left font-['Open_Sans','Noto_Sans_CJK_SC',sans-serif] text-[9px] leading-[15px] text-[#222]">
                  <thead>
                    <tr className="h-[17px]">
                      <th className="pl-1 font-normal bg-gradient-to-b from-[#f2fafe] to-[#d5ebf6] border-r border-[#9dd3ec]">
                        <span className="flex items-start">
                          <span className="w-[106px]">名称</span>
                          <Arrow dir="up" className="w-[5px] h-[5px] text-[#5a87a5]" />
                        </span>
                      </th>
                      <th className="w-[99px] pl-[5px] font-normal bg-gradient-to-b from-white to-[#f1f2f4] border-r border-b border-[#e3e8ee]">修改日期</th>
                      <th className="w-[39px] pl-[5px] font-normal bg-gradient-to-b from-white to-[#f1f2f4] border-b border-[#e3e8ee]">类型</th>
                    </tr>
                  </thead>
                  <tbody>
                    {FILES.map(([name, date]) => (
                      <tr key={name} className="whitespace-nowrap">
                        <td className="pl-[5px] border-r border-[#eaf3fa]">
                          <span className="flex items-center gap-[2px]">
                            <Icon name="folder" className="w-3 h-3" />
                            {name}
                          </span>
                        </td>
                        <td className="pl-[5px] overflow-hidden border-r border-[#eaf3fa]">{date}</td>
                        <td className="pl-[5px]">文件夹</td>
                      </tr>
                    ))}
                  </tbody>
                </table>
              </div>
              <div className="w-[11px] flex flex-col items-center bg-[#f0f0f0]">
                <span className="h-[13px] flex items-center"><Arrow dir="up" className="w-[5px] h-[5px] text-gray-700" /></span>
                <span className="w-[11px] h-[90px] flex items-center justify-center rounded-sm border border-[#a0a0a0] bg-gradient-to-r from-[#f5f5f5] to-[#c9c9cb]"><Grip vertical /></span>
                <span className="mt-auto h-[13px] flex items-center"><Arrow className="w-[5px] h-[5px] text-gray-700" /></span>
              </div>
            </div>
            <div className="h-3 mr-[11px] flex items-center bg-[#f0f0f0]">
              <span className="w-[13px] flex justify-center"><Arrow dir="left" className="w-[5px] h-[5px]" /></span>
              <span className="w-[246px] h-[11px] flex items-center justify-center rounded-sm border border-[#a0a0a0] bg-gradient-to-b from-[#f5f5f5] to-[#c9c9cb]"><Grip /></span>
              <span className="ml-auto w-[13px] flex justify-center"><Arrow dir="right" className="w-[5px] h-[5px]" /></span>
            </div>

            <div className="mt-[21px] flex flex-col gap-[6px]">
              <div className="flex items-center">
                <label htmlFor="fname" className="w-[61px] whitespace-nowrap">文件名(<u>N</u>):</label>
                <div className="flex-1 h-[15px] flex items-center pr-[3px] bg-white border border-[#7fb1d8]">
                  <input
                    id="fname"
                    ref={nameRef}
                    defaultValue="Drawing1-Model.pdf"
                    className="flex-1 min-w-0 pl-px h-[13px] outline-none text-[8px] font-['Liberation_Mono',monospace] selection:bg-[#3399ff] selection:text-white"
                  />
                  <Arrow />
                </div>
                <button className="w-[60px] h-[15px] ml-2 rounded-sm border border-[#8a8a8a] bg-gradient-to-b from-[#f7f7f7] to-[#d4d4d4] leading-[13px]">
                  保存(<u>S</u>)
                </button>
              </div>
              <div className="flex items-center">
                <label htmlFor="ftype" className="w-[61px] whitespace-nowrap">文件类型(<u>T</u>):</label>
                <div className="flex-1 h-[15px] flex items-center pr-[3px] rounded-sm border border-[#8a8a8a] bg-gradient-to-b from-[#f4f4f4] to-[#d6d6d6]">
                  <select id="ftype" className="flex-1 appearance-none pl-[2px] text-[8px] font-['Liberation_Mono',monospace]">
                    <option>*.pdf</option>
                  </select>
                  <Arrow />
                </div>
                <button className="w-[60px] h-[15px] ml-2 rounded-sm border border-[#8a8a8a] bg-gradient-to-b from-[#f7f7f7] to-[#d4d4d4] leading-[13px]">取消</button>
              </div>
            </div>
          </div>
        </div>
      </div>
    </div>
  );
}

function Slash() {
  return (
    <svg viewBox="0 0 5 12" className="w-[5px] h-3"><path d="M5 0L1 12" stroke="#222" strokeWidth="1.300" /></svg>
  );
}

function LayoutTabs() {
  return (
    <div className="h-3 shrink-0 flex items-center bg-[#f0f0f0] text-[9px] leading-3">
      {['M2 1v8M9 1v8L4 5z', 'M8 1v8L3 5z', 'M3 1v8l5-4z', 'M2 1v8l5-4zM9 1v8'].map((d, i) => (
        <button key={d} aria-label={['首个', '上一个', '下一个', '末个'][i]} className="w-[13px] h-3 flex items-center justify-center border-r border-gray-300 bg-white">
          <svg viewBox="0 0 10 10" className="w-[7px] h-[7px]"><path d={d} fill="#000" stroke="#000" /></svg>
        </button>
      ))}
      <button className="h-3 ml-[3px] flex items-center whitespace-nowrap">
        <svg viewBox="0 0 5 12" className="w-[5px] h-3"><path d="M0 0h5v12H4z" fill="#000" /></svg>
        <span className="h-3 px-px bg-black text-white">模型</span>
        <svg viewBox="0 0 5 12" className="w-[5px] h-3"><path d="M0 0h5L1 12H0z" fill="#000" /></svg>
      </button>
      {['布局1', '布局2'].map((t) => (
        <button key={t} className="h-3 flex items-center bg-[#f6f6f6] whitespace-nowrap border-b border-gray-600">
          <span className="px-[2px]">{t}</span>
          <Slash />
        </button>
      ))}
    </div>
  );
}

function CommandLine() {
  return (
    <div className="shrink-0 pt-1 bg-[#f0f0f0]">
      <div className="pt-[6px] pl-1 pr-[6px] border-t border-[#888] flex">
        <span className="w-[5px] h-7 mr-[3px] border-x border-[#b5b5b5] bg-white"></span>
        <div className="flex-1 border-t border-l border-[#666] bg-white">
          <div className="h-[17px] flex items-start border-b border-[#bbb]">
            <p className="flex-1 pl-px text-[11px] leading-[14px] text-[#222] font-['Liberation_Mono','Noto_Sans_CJK_SC',monospace]">
              按 Esc 或 Enter 键退出，或单击右键显示快捷菜单。
            </p>
            <span className="w-[11px] h-4 flex flex-col justify-around items-center bg-[#f0f0f0]">
              <Arrow dir="up" className="w-[5px] h-[5px]" />
              <Arrow className="w-[5px] h-[5px]" />
            </span>
          </div>
          <div className="h-[15px] flex items-center">
            <input aria-label="命令" className="flex-1 h-[13px] outline-none text-[11px]" />
            <div className="w-12 h-3 mr-[13px] px-1 flex items-center justify-between bg-[#f0f0f0]">
              <Arrow dir="left" className="w-[5px] h-[5px]" />
              <span className="w-[11px] h-[11px] rounded-sm border border-[#aaa] bg-gradient-to-b from-[#f5f5f5] to-[#ccc]"></span>
              <span className="w-1"></span>
              <Arrow dir="right" className="w-[5px] h-[5px]" />
            </div>
          </div>
        </div>
      </div>
    </div>
  );
}

const MODES = [
  ['捕捉', false], ['栅格', false], ['正交', false], ['极轴', true], ['对象捕捉', true],
  ['对象追踪', true], ['DUCS', true], ['DYN', true], ['线宽', false], ['模型', true],
];

function StatusBar() {
  return (
    <div className="h-[18px] shrink-0 flex items-center pl-1 pt-[2px] border-t-2 border-[#cfcfcf] bg-[#f0eeec]">
      <span className="w-[135px] h-[13px] mr-[3px] border border-[#c0bcbc] text-[7px] leading-3 text-[#a5a5a5] whitespace-nowrap font-['Liberation_Mono',monospace]">
        -6001.4841, -2283.7023, 0.0000
      </span>
      <div className="flex gap-px">
        {MODES.map(([name, on]) => (
          <button
            key={name}
            className={
              "h-[14px] px-px text-[9px] leading-[13px] text-black whitespace-nowrap border font-['Noto_Sans_CJK_SC',sans-serif] " +
              (on ? 'border-t-[#555] border-l-[#555] border-r-white border-b-white' : 'border-t-white border-l-white border-r-[#bbb] border-b-[#bbb]')
            }
          >
            {/^D/.test(name) ? <span className="text-[8px] font-['Liberation_Mono',monospace]">{name}</span> : name}
          </button>
        ))}
      </div>
    </div>
  );
}

const APPS = [
  <><circle cx="8" cy="8" r="6" fill="#e8701a" /><circle cx="8" cy="7" r="3.500" fill="#2a5ea8" /><path d="M2 6c1 6 6 7 11 4-1 6-11 6-11-4z" fill="#f7a52c" /></>,
  <><path d="M1 3h5l1 2h8v9H1z" fill="#f4dc86" stroke="#b79a3c" /><path d="M4 10h8v4H4z" fill="#7fc0e8" /></>,
  ICONS.cad,
  <><path d="M1 1h14v14H1z" fill="#1f5fd0" /><path d="M3 4l2 8 3-6 3 6 2-8" fill="none" stroke="#fff" strokeWidth="2" /></>,
  <><path d="M1 9c0-5 8-7 10-3s-1 2-2 4-8 3-8-1z" fill="#e4eef6" stroke="#667" strokeWidth=".6" /><circle cx="4" cy="8" r="1.300" fill="#d33" /><circle cx="7" cy="6" r="1.300" fill="#3a3" /><circle cx="6" cy="10" r="1.300" fill="#36c" /><path d="M11 5l3 1v8h-3z" fill="#f0891f" /><circle cx="13" cy="3" r="1.500" fill="#f0891f" /></>,
];

function Taskbar() {
  return (
    <footer className="h-[21px] shrink-0 flex items-center pl-2 bg-gradient-to-r from-[#3a6f9f] via-[#4a90cc] via-50% to-[#2b5680] border-t border-[#41637f]">
      <button aria-label="开始" className="w-6 flex justify-center">
        <svg viewBox="0 0 24 24" className="w-6 h-6">
          <circle cx="12" cy="12" r="11" fill="#2d6c9f" stroke="#a8cfe6" />
          <path d="M5 7c2-1 4-1 6 0v5c-2-1-4-1-6 0z" fill="#ee5a24" />
          <path d="M12 7c2 1 4 1 6 0v5c-2 1-4 1-6 0z" fill="#8cc63f" />
          <path d="M5 13c2-1 4-1 6 0v5c-2-1-4-1-6 0z" fill="#37a8e8" />
          <path d="M12 13c2 1 4 1 6 0v5c-2 1-4 1-6 0z" fill="#fdc82f" />
        </svg>
      </button>
      <span className="w-[6px] h-4 ml-[10px] mr-2 border-x-2 border-dotted border-[#24507a]"></span>
      <div className="flex gap-[3px]">
        {[0, 1, 2, 3, 4, 4].map((n, i) => (
          <button key={i} aria-label={'任务 ' + (i + 1)} className={'w-[31px] h-5 flex items-center justify-center rounded-sm border border-[#8fb9dc] ' + (n === 2 ? 'bg-[#b4d3e6]' : 'bg-gradient-to-b from-[#7aa9cf] to-[#4a82b4]')}>
            <svg viewBox="0 0 16 16" className="w-3 h-3">{APPS[n]}</svg>
          </button>
        ))}
      </div>
      <div className="ml-auto h-full flex items-center text-white">
        <span className="w-[6px] h-4 mr-[6px] border-x-2 border-dotted border-[#1d3f60]"></span>
        <svg viewBox="0 0 16 16" className="w-3 h-3 mr-[11px]"><path d="M2 2l11-1 2 11-12 3z" fill="#e8431c" /><path d="M11 5c-6-2-7 2-3 3s2 4-3 3" fill="none" stroke="#fff" strokeWidth="2" /></svg>
        <svg viewBox="0 0 16 16" className="w-[15px] h-[15px] mr-[9px]"><path d="M1 7c4-5 10-5 14 0M3 9c3-4 7-4 10 0M5.500 11.500c2-2 3-2 5 0" fill="none" stroke="#fff" strokeWidth="1.400" /><circle cx="8" cy="13.500" r="1.400" fill="#fff" /></svg>
        <Arrow dir="up" className="w-[5px] h-[5px] mr-[9px] text-white" />
        <svg viewBox="0 0 16 16" className="w-[13px] h-[13px] mr-[5px]"><path d="M5 2c4-2 6 2 5 5l2 6H2l2-6c-1-2-1-4 1-5z" fill="#151515" /><path d="M4 9h6v4H4z" fill="#fff" /><path d="M3 7h8v2H3z" fill="#d22" /><path d="M7 8h8v5h-4l-2 2v-2H7z" fill="#ffcc3a" /></svg>
        <svg viewBox="0 0 16 16" className="w-[13px] h-[13px] mr-[5px]"><path d="M5 4h9v7H5zM7 14h6M10 11v3M1 2h3v3H1zM2.500 5v8H6" fill="none" stroke="#fff" strokeWidth="1.300" /></svg>
        <svg viewBox="0 0 16 16" className="w-[13px] h-[13px] mr-[4px]"><path d="M2 6h3l4-4v12l-4-4H2z" fill="#fff" /><path d="M11 5c2 2 2 4 0 6" fill="none" stroke="#fff" /></svg>
        <svg viewBox="0 0 16 16" className="w-[13px] h-[13px] mr-[14px]"><path d="M3 3h6v11H3zM5 1h2v2H5z" fill="none" stroke="#fff" strokeWidth="1.400" /><path d="M9 6h6v3l-2 2v3M10 3v3M14 3v3" fill="none" stroke="#fff" strokeWidth="1.400" /></svg>
        <time className="w-[22px] mr-[11px] text-[9px] leading-5 font-['Open_Sans','Noto_Sans',sans-serif]">13:03</time>
        <button aria-label="显示桌面" className="w-[10px] h-full border border-[#7d9db8] bg-gradient-to-b from-[#5b87ad] to-[#24486c]"></button>
      </div>
    </footer>
  );
}

function ImeBar() {
  return (
    <div className="absolute right-0 bottom-[21px] h-[18px] flex items-center gap-[5px] pr-[3px] rounded bg-white/90 border border-[#b9d4ea] text-[#1b72c4] text-[10px] leading-4 font-bold">
      <svg viewBox="0 0 20 20" className="w-[19px] h-[19px] -ml-px"><path d="M1 3l16-2 2 15-15 3z" fill="#ee4a1c" /><path d="M14 6C6 3 4 8 10 9s4 6-5 4" fill="none" stroke="#fff" strokeWidth="2.600" /></svg>
      <span>英</span>
      <svg viewBox="0 0 16 16" className="w-3 h-3"><path d="M10 2c5 4 2 12-4 12-3 0-4-2-5-4 5 1 9-3 9-8z" fill="#1b72c4" /></svg>
      <span className="w-3 text-center">°,</span>
      <svg viewBox="0 0 16 16" className="w-3 h-3"><path d="M1 3h14v10H1z" fill="#1b72c4" /><path d="M3 6h10M3 8h10M5 11h6" stroke="#fff" strokeDasharray="2 1" strokeWidth="1.300" /></svg>
      <svg viewBox="0 0 16 16" className="w-3 h-3"><circle cx="7" cy="4" r="3" fill="#9db4d0" /><path d="M1 14c0-8 11-8 12 0z" fill="#9db4d0" /></svg>
      <svg viewBox="0 0 16 16" className="w-3 h-3"><path d="M5 2c1 2 5 2 6 0l5 3-2 3-2-1v8H4V7L2 8 0 5z" fill="#1b72c4" /></svg>
      <svg viewBox="0 0 16 16" className="w-3 h-3"><path d="M15 5l-3 2-3-3 2-3c-4-1-6 3-5 5l-5 6 3 3 6-5c3 1 6-2 5-5z" fill="#1b72c4" /></svg>
    </div>
  );
}

function Watermark() {
  return (
    <div className="absolute right-[52px] bottom-[21px] w-[180px] pointer-events-none text-white/80 font-['Liberation_Sans','Noto_Sans_CJK_SC',sans-serif]" aria-hidden="true">
      <div className="flex items-end font-bold [text-shadow:0_0_2px_#888]">
        <span className="w-[60px] text-[38px] leading-[36px]">Bai</span>
        <div className="relative w-[54px] h-[56px] shrink-0">
          <svg viewBox="0 0 56 58" className="w-full h-full">
            <g fill="#fff" fillOpacity=".72" stroke="#999" strokeOpacity=".5">
              <ellipse cx="8" cy="23" rx="7" ry="9" />
              <ellipse cx="21" cy="10" rx="7" ry="9" />
              <ellipse cx="37" cy="11" rx="7" ry="9" />
              <ellipse cx="48" cy="27" rx="7" ry="8" />
              <path d="M28 24c8 0 10 8 16 13s10 19-4 19c-8 0-16 0-24 0C2 56 2 43 10 38s10-14 18-14z" fillOpacity=".8" />
            </g>
          </svg>
          <span className="absolute left-[12px] bottom-[3px] text-[26px] leading-[24px] text-white">du</span>
        </div>
        <span className="ml-1 text-[30px] leading-[36px] whitespace-nowrap">经验</span>
      </div>
      <div className="mt-[5px] text-[21px] leading-[22px] whitespace-nowrap [text-shadow:0_0_2px_#888]">jingyan.baidu.com</div>
    </div>
  );
}

export default function App() {
  return (
    <div className="relative h-screen w-full flex flex-col overflow-hidden bg-[#f0f0f0] font-['Liberation_Sans','Noto_Sans_CJK_SC',sans-serif]">
      <TitleBar />
      <MenuBar />
      <Toolbars />
      <div className="flex-1 min-h-0 flex">
        <DrawBar />
        <main className="flex-1 min-w-0 flex flex-col">
          <div className="relative flex-1 min-h-0 mr-px bg-black flex items-end">
            <svg viewBox="0 0 80 80" className="w-20 h-20" role="img" aria-label="坐标系">
              <g fill="none" stroke="#ddd">
                <path d="M8 64h7v7H8zM11.500 64V26M9 26l3-8 3 8zM15 67.500h33M48 65l7 2.500-7 3z" />
                <path d="M9 3l4 5 4-5M13 8v6M63 63l7 9M70 63l-7 9" stroke="#aaa" />
              </g>
            </svg>
            <SaveDialog />
          </div>
          <LayoutTabs />
        </main>
      </div>
      <CommandLine />
      <StatusBar />
      <Taskbar />
      <ImeBar />
      <Watermark />
    </div>
  );
}
